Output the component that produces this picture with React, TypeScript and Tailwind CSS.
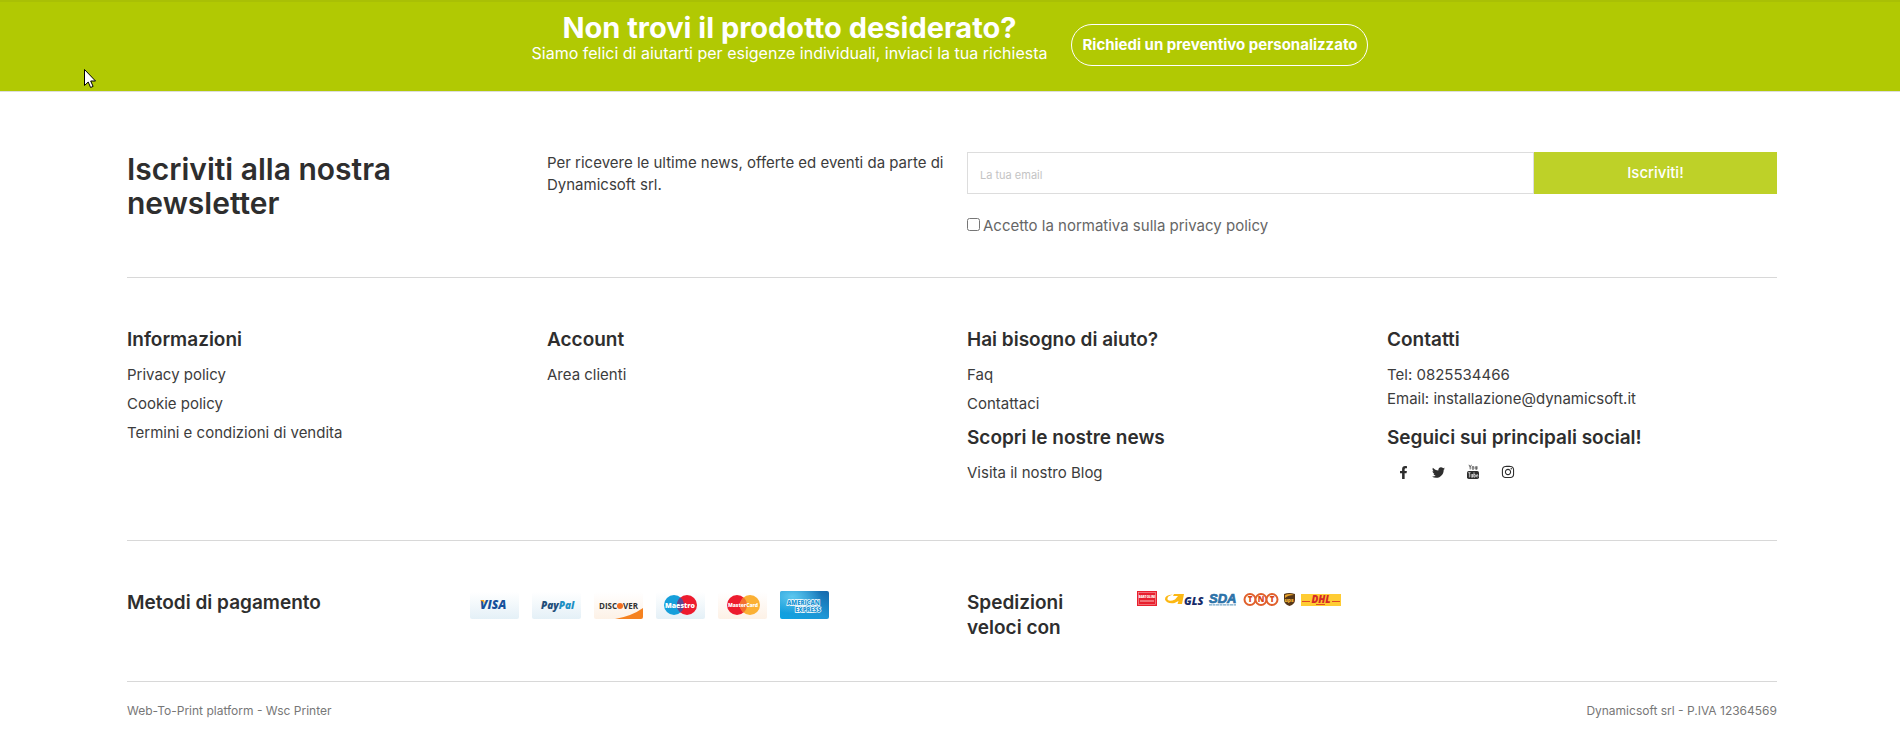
import type { ReactNode } from "react";
import { FaFacebookF, FaInstagram, FaTwitter } from "react-icons/fa";

interface FooterLink {
  label: string;
  href: string;
}

const infoLinks: FooterLink[] = [
  { label: "Privacy policy", href: "#privacy" },
  { label: "Cookie policy", href: "#cookie" },
  { label: "Termini e condizioni di vendita", href: "#termini" },
];

const accountLinks: FooterLink[] = [{ label: "Area clienti", href: "#account" }];

const helpLinks: FooterLink[] = [
  { label: "Faq", href: "#faq" },
  { label: "Contattaci", href: "#contatti" },
];

const newsLinks: FooterLink[] = [{ label: "Visita il nostro Blog", href: "#blog" }];

function FooterHeading({ children }: { children: ReactNode }) {
  return <h3 className="text-[19px] leading-[25px] font-semibold text-[#2e2e2e]">{children}</h3>;
}

function LinkList({ links }: { links: FooterLink[] }) {
  return (
    <ul className="mt-2 text-[15px]">
      {links.map((link) => (
        <li key={link.label} className="leading-[29px]">
          <a href={link.href}>{link.label}</a>
        </li>
      ))}
    </ul>
  );
}

function YoutubeIcon() {
  return (
    <svg viewBox="0 0 14 16" className="h-4 w-3.5" aria-hidden="true">
      <path
        d="M3 .8l1.2 2.6v2M5.4 .8L4.2 3.4M6.3 3v1.8q0 .7.7.7t.7-.7V3q0-.6-.7-.6t-.7.6M9.3 2.3v2.6q.1.8 1.5.1V2.3v3.3"
        fill="none"
        stroke="#555"
        strokeWidth=".9"
      />
      <rect x="1" y="7" width="12" height="8" rx="1.8" fill="#2e2e2e" />
      <path
        d="M2.2 8.7h2.4M3.4 8.7v4.7M5.2 10v2.8q.2.8 1.6.1V10v3.4M8 8.3v5M8 10.8q1.4-1 1.4.3v1.4q0 1.2-1.4.4M12 12.4q-.8 1.6-1.5.2v-1.4q.7-1.6 1.4 0v.5h-1.4"
        fill="none"
        stroke="#fff"
        strokeWidth=".65"
      />
    </svg>
  );
}

function PaymentCards() {
  return (
    <svg
      viewBox="0 0 359 28"
      className="h-7 w-[359px] shrink-0"
      role="img"
      aria-label="Visa, PayPal, Discover, Maestro, MasterCard, American Express"
      fontFamily="'Open Sans', sans-serif"
    >
      <defs>
        <linearGradient id="cool" x2="0" y2="1">
          <stop stopColor="#fff" />
          <stop offset="1" stopColor="#e4f0f7" />
        </linearGradient>
        <linearGradient id="warm" x2="0" y2="1">
          <stop stopColor="#fff" />
          <stop offset="1" stopColor="#fdf1e6" />
        </linearGradient>
        <linearGradient id="amex" x1="0" x2="1" y1="1" y2="0">
          <stop stopColor="#0da3e2" />
          <stop offset=".5" stopColor="#1e96d5" />
          <stop offset="1" stopColor="#1767aa" />
        </linearGradient>
        <radialGradient id="amexGlow" cx=".25" cy=".2" r=".6">
          <stop stopColor="#5cc8ef" />
          <stop offset="1" stopColor="#5cc8ef" stopOpacity="0" />
        </radialGradient>
      </defs>

      <rect y="1" width="49" height="27" rx="2" fill="url(#cool)" />
      <text x="10" y="18" fontSize="12" fontWeight="800" fontStyle="italic" fill="#16509a">VISA</text>
      <path d="M10 9h4l1 4q-2-3-5-4z" fill="#f7a91c" />

      <rect x="62" y="1" width="49" height="27" rx="2" fill="url(#cool)" />
      <text x="71" y="18" fontSize="10" fontWeight="800" fontStyle="italic" fill="#1f4e79">
        Pay<tspan fill="#1d8fc3">Pal</tspan>
      </text>

      <rect x="124" y="1" width="49" height="27" rx="2" fill="url(#warm)" />
      <path d="M145 28q17-3 28-11v9q0 2-2 2z" fill="#f58220" />
      <text x="129" y="18" fontSize="8" fontWeight="700" fill="#333">DISC</text>
      <circle cx="150" cy="15" r="3" fill="#f36f21" />
      <text x="153" y="18" fontSize="8" fontWeight="700" fill="#333">VER</text>

      <rect x="186" y="1" width="49" height="27" rx="2" fill="url(#cool)" />
      <circle cx="204" cy="14" r="10" fill="#159fdb" />
      <circle cx="217" cy="14" r="10" fill="#ed1b2e" />
      <path d="M210.500 6.400a10 10 0 0 1 0 15.200a10 10 0 0 1 0-15.200" fill="#5a4a94" />
      <text x="210" y="17" textAnchor="middle" fontSize="7" fontWeight="800" fill="#fff">Maestro</text>

      <rect x="248" y="1" width="49" height="27" rx="2" fill="url(#warm)" />
      <circle cx="267" cy="14" r="10" fill="#ed1b2e" />
      <circle cx="280" cy="14" r="10" fill="#fbb034" />
      <path d="M273.500 6.400a10 10 0 0 1 0 15.200a10 10 0 0 1 0-15.200" fill="#f36f30" />
      <text x="273" y="16" textAnchor="middle" fontSize="5" fontWeight="800" fill="#fff">MasterCard</text>

      <rect x="310" width="49" height="28" rx="2" fill="url(#amex)" />
      <rect x="310" width="49" height="28" rx="2" fill="url(#amexGlow)" />
      <g fontSize="6" fontWeight="800" fill="#2194d2" stroke="#fff" strokeWidth="1.300" paintOrder="stroke">
        <text x="317" y="14">AMERICAN</text>
        <text x="325" y="21">EXPRESS</text>
      </g>
    </svg>
  );
}

function CarrierLogos() {
  return (
    <svg
      viewBox="0 0 205 16"
      className="h-4 w-[205px] shrink-0"
      role="img"
      aria-label="Bartolini, GLS, SDA, TNT, UPS, DHL"
      fontFamily="'Open Sans', sans-serif"
    >
      <rect width="20" height="15" fill="#e8202d" />
      <rect x="1.500" y="1.500" width="17" height="12" fill="none" stroke="#f7a0a3" strokeWidth=".6" />
      <text x="10" y="7" textAnchor="middle" fontSize="3" fontWeight="800" fill="#fff">BARTOLINI</text>
      <path d="M3 10h14" stroke="#f48d91" strokeWidth="1.500" />

      <path
        d="M36 3.500Q27.500 4 28 8.500q1.500 4.500 9.500 3.500l4-2-1 3h4.500L47 3H37l-1 2h5l-3 3.500q-5.500 2.500-7.500 0Q29.500 5 36 3.500z"
        fill="#fcb814"
      />
      <text x="47" y="14" fontSize="11" fontWeight="800" fontStyle="italic" fill="#162a68">GLS</text>

      <text
        x="72"
        y="12"
        fontFamily="'Liberation Sans', sans-serif"
        fontSize="13"
        fontWeight="700"
        fontStyle="italic"
        fill="#2c72a8"
        stroke="#2c72a8"
        strokeWidth=".7"
      >
        SDA
      </text>
      <path d="M72 13.800h27" stroke="#72a5c8" strokeWidth="1.300" strokeDasharray="3 .5" />

      <g fill="#fff" stroke="#e0602c" strokeWidth="2">
        <circle cx="113" cy="8.500" r="5.500" />
        <circle cx="124" cy="8.500" r="5.500" />
        <circle cx="135" cy="8.500" r="5.500" />
      </g>
      <g fill="#d94817" fontSize="8" fontWeight="800" textAnchor="middle">
        <text x="113" y="11">T</text>
        <text x="124" y="11">N</text>
        <text x="135" y="11">T</text>
      </g>

      <path d="M147 3q5-2 11 0v6q0 4-5.500 6Q147 13 147 9z" fill="#573718" />
      <path d="M148 4q5-2 9 0Q151 4 148 7z" fill="#e9a329" />
      <text x="152" y="11" textAnchor="middle" fontSize="5" fontWeight="800" fill="#f5b335">ups</text>

      <rect x="164" y="3" width="40" height="12" fill="#fc3" />
      <text x="184" y="12" textAnchor="middle" fontSize="10" fontWeight="800" fontStyle="italic" fill="#d42a27">DHL</text>
      <path d="M165 10.500h8M195 10.500h8M179 13.500h9" stroke="#df4b26" strokeWidth="1" />
    </svg>
  );
}

function QuoteBanner() {
  return (
    <section className="flex min-h-[92px] flex-wrap items-start justify-center gap-x-6 border-t-2 border-b border-t-[#a9c005] border-b-[#dddddd] bg-[#b1c903] px-4 text-white">
      <div className="pt-3 text-center">
        <h2 className="text-[29px] leading-7 font-bold">Non trovi il prodotto desiderato?</h2>
        <p className="text-base leading-[22px]">
          Siamo felici di aiutarti per esigenze individuali, inviaci la tua richiesta
        </p>
      </div>
      <button
        type="button"
        className="mt-[22px] h-[42px] rounded-[25px] border border-white px-2.5 text-[15px] font-bold"
      >
        Richiedi un preventivo personalizzato
      </button>
    </section>
  );
}

function Newsletter() {
  return (
    <section className="grid grid-cols-4 gap-x-[30px] border-b border-[#d8d8d8] pt-[60px] pb-10">
      <h2 className="text-[30px] leading-[34px] font-semibold text-[#2e2e2e]">
        Iscriviti alla nostra newsletter
      </h2>
      <p className="-mr-4 text-[15px] leading-[22px]">
        Per ricevere le ultime news, offerte ed eventi da parte di Dynamicsoft srl.
      </p>
      <form className="col-span-2" onSubmit={(event) => event.preventDefault()}>
        <div className="flex">
          <input
            type="email"
            aria-label="La tua email"
            placeholder="La tua email"
            className="h-[42px] min-w-0 flex-1 border border-[#dddddd] px-3 pt-1 text-[11px] placeholder:text-[#c4c4c4]"
          />
          <button type="submit" className="w-[30%] bg-[#bed128] text-[15px] font-medium text-white">
            Iscriviti!
          </button>
        </div>
        <label className="mt-[21px] flex items-center gap-[3px] text-[15px] leading-[22px] text-[#666666]">
          <input type="checkbox" className="mb-[3px] size-[13px]" />
          Accetto la normativa sulla privacy policy
        </label>
      </form>
    </section>
  );
}

function SocialLinks() {
  return (
    <div className="mt-2.5 flex items-center gap-[19px] pl-2 text-[#2e2e2e]">
      <a href="#facebook" aria-label="Facebook" className="flex h-6 w-4 items-center justify-center">
        <FaFacebookF className="size-[13px]" />
      </a>
      <a href="#twitter" aria-label="Twitter" className="flex h-6 w-4 items-center justify-center">
        <FaTwitter className="size-[13px]" />
      </a>
      <a href="#youtube" aria-label="YouTube" className="flex h-6 w-4 items-center justify-center">
        <YoutubeIcon />
      </a>
      <a href="#instagram" aria-label="Instagram" className="flex h-6 w-4 items-center justify-center">
        <FaInstagram className="size-3.5" />
      </a>
    </div>
  );
}

export default function App() {
  return (
    <div className="min-h-screen bg-white font-['Inter',sans-serif] text-[#3c3c3c]">
      <QuoteBanner />
      <footer className="pl-1">
        <div className="mx-auto max-w-[1680px] px-[15px]">
          <Newsletter />

          <section className="grid grid-cols-4 gap-x-[30px] border-b border-[#d8d8d8] pt-[49px] pb-[53px]">
            <div>
              <FooterHeading>Informazioni</FooterHeading>
              <LinkList links={infoLinks} />
            </div>
            <div>
              <FooterHeading>Account</FooterHeading>
              <LinkList links={accountLinks} />
            </div>
            <div>
              <FooterHeading>Hai bisogno di aiuto?</FooterHeading>
              <LinkList links={helpLinks} />
              <div className="mt-[7px]">
                <FooterHeading>Scopri le nostre news</FooterHeading>
                <LinkList links={newsLinks} />
              </div>
            </div>
            <div>
              <FooterHeading>Contatti</FooterHeading>
              <address className="mt-[11px] text-[15px] leading-6 not-italic">
                <p>Tel: 0825534466</p>
                <p>Email: installazione@dynamicsoft.it</p>
              </address>
              <div className="mt-3.5">
                <FooterHeading>Seguici sui principali social!</FooterHeading>
                <SocialLinks />
              </div>
            </div>
          </section>

          <section className="grid grid-cols-2 gap-x-[30px] border-b border-[#d8d8d8] pt-[49px] pb-[41px]">
            <div className="flex items-start">
              <div className="w-[343px]">
                <FooterHeading>Metodi di pagamento</FooterHeading>
              </div>
              <div className="pt-px">
                <PaymentCards />
              </div>
            </div>
            <div className="flex items-start">
              <div className="w-[170px] pr-12">
                <FooterHeading>Spedizioni veloci con</FooterHeading>
              </div>
              <div className="pt-px">
                <CarrierLogos />
              </div>
            </div>
          </section>

          <div className="flex justify-between pt-[19px] text-xs leading-5 text-[#777777]">
            <p>Web-To-Print platform - Wsc Printer</p>
            <p>Dynamicsoft srl - P.IVA 12364569</p>
          </div>
        </div>
      </footer>

      {/* mouse pointer resting over the banner */}
      <svg viewBox="0 0 12 19" className="pointer-events-none absolute top-[69px] left-[84px] h-[19px] w-3" aria-hidden="true">
        <path d="M.5.5v16l3.700-3.500 2.400 5.500 2.500-1.100-2.400-5.400h4.800z" fill="#fff" stroke="#000" strokeWidth="1" />
      </svg>
    </div>
  );
}
